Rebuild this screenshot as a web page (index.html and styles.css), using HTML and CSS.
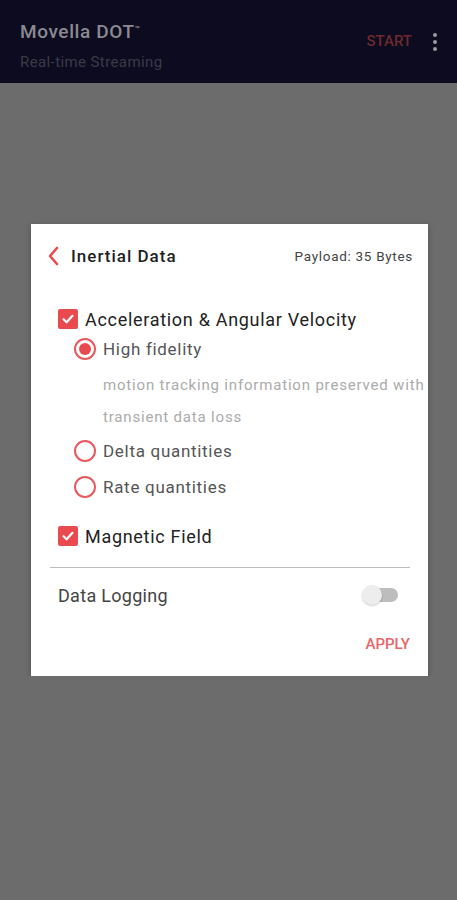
FILE: index.html
```html
<!DOCTYPE html>
<html lang="en">
<head>
    <meta charset="UTF-8">
    <title>Movella DOT - Real-time Streaming</title>
    <link rel="stylesheet" href="styles.css">
</head>
<body>

<div class="appbar">
    <div class="appbar-titles">
        <div class="app-title">Movella DOT<span class="tm">™</span></div>
        <div class="app-subtitle">Real-time Streaming</div>
    </div>
    <div class="appbar-start">START</div>
    <div class="kebab"><span></span><span></span><span></span></div>
</div>

<div class="dialog">
    <div class="dialog-header">
        <svg class="back" width="12" height="20" viewBox="0 0 12 20">
            <path d="M10 2 L3 10 L10 18" fill="none" stroke="#e84a4f" stroke-width="2.6" stroke-linecap="round" stroke-linejoin="round"/>
        </svg>
        <div class="dialog-title">Inertial Data</div>
        <div class="payload">Payload: 35 Bytes</div>
    </div>

    <div class="check-row first">
        <span class="checkbox"><svg width="14" height="14" viewBox="0 0 14 14"><path d="M2.5 7.2 L5.6 10.2 L11.5 3.8" fill="none" stroke="#fff" stroke-width="2.2" stroke-linecap="round" stroke-linejoin="round"/></svg></span>
        <span class="check-label">Acceleration &amp; Angular Velocity</span>
    </div>
    <div class="radio-row">
        <span class="radio checked"></span>
        <span class="radio-label">High fidelity</span>
    </div>
    <div class="description">
        motion tracking information preserved with<br>
        transient data loss
    </div>
    <div class="radio-row tall">
        <span class="radio"></span>
        <span class="radio-label">Delta quantities</span>
    </div>
    <div class="radio-row tall">
        <span class="radio"></span>
        <span class="radio-label">Rate quantities</span>
    </div>

    <div class="check-row magnetic">
        <span class="checkbox"><svg width="14" height="14" viewBox="0 0 14 14"><path d="M2.5 7.2 L5.6 10.2 L11.5 3.8" fill="none" stroke="#fff" stroke-width="2.2" stroke-linecap="round" stroke-linejoin="round"/></svg></span>
        <span class="check-label">Magnetic Field</span>
    </div>

    <div class="divider"></div>

    <div class="logging-row">
        <span class="logging-label">Data Logging</span>
        <span class="switch"><span class="switch-thumb"></span></span>
    </div>

    <div class="actions">
        <span class="apply">APPLY</span>
    </div>
</div>

</body>
</html>
```

FILE: styles.css
```css
body {
    margin: 0;
    background-color: #6c6c6c;
    font-family: Roboto, "Liberation Sans", sans-serif;
}
.appbar {
    height: 83px;
    background-color: #0c0b1f;
    display: flex;
    align-items: flex-start;
    padding: 0 0 0 20px;
    box-sizing: border-box;
}
.appbar-titles {
    flex: 1;
    padding-top: 21px;
}
.app-title {
    font-size: 19px;
    font-weight: 500;
    color: #8b8a90;
    line-height: 22px;
    letter-spacing: 0.6px;
}
.tm {
    font-size: 8px;
    vertical-align: top;
    position: relative;
    top: -2px;
}
.app-subtitle {
    font-size: 15px;
    color: #3b3a48;
    margin-top: 9px;
    line-height: 20px;
    letter-spacing: 0.4px;
}
.appbar-start {
    font-size: 15px;
    font-weight: 500;
    color: #6c2a2e;
    padding-top: 32px;
    margin-right: 21px;
}
.kebab {
    display: flex;
    flex-direction: column;
    gap: 3px;
    padding-top: 33px;
    margin-right: 20px;
}
.kebab span {
    width: 4px;
    height: 4px;
    border-radius: 50%;
    background-color: #9a9aa0;
}
.dialog {
    width: 397px;
    margin: 141px 0 0 31px;
    background-color: #fff;
    padding: 20px 18px 19px 19px;
    box-sizing: border-box;
    box-shadow: 0 2px 6px rgba(0, 0, 0, 0.25);
    letter-spacing: 0.7px;
}
.dialog-header {
    height: 24px;
    display: flex;
    align-items: center;
}
.back {
    margin-left: -3px;
    margin-right: 12px;
}
.dialog-title {
    flex: 1;
    font-size: 17px;
    font-weight: 500;
    color: #1f1f1f;
    letter-spacing: 1px;
}
.payload {
    font-size: 13.5px;
    color: #444;
    margin-right: -3px;
}
.check-row {
    height: 30px;
    display: flex;
    align-items: center;
    padding-left: 8px;
}
.check-row.first {
    margin-top: 36px;
}
.check-row.magnetic {
    margin-top: 16px;
}
.checkbox {
    width: 20px;
    height: 20px;
    border-radius: 2px;
    background-color: #e84a4f;
    display: flex;
    align-items: center;
    justify-content: center;
    margin-right: 7px;
}
.check-label {
    font-size: 18px;
    color: #222;
}
.radio-row {
    height: 30px;
    display: flex;
    align-items: center;
    padding-left: 24px;
}
.radio-row.tall {
    height: 36px;
}
.radio {
    width: 18px;
    height: 18px;
    border: 2px solid #e8595e;
    border-radius: 50%;
    margin-right: 7px;
    position: relative;
}
.radio.checked::after {
    content: "";
    position: absolute;
    left: 3px;
    top: 3px;
    width: 12px;
    height: 12px;
    border-radius: 50%;
    background-color: #e84a4f;
}
.radio-label {
    font-size: 17px;
    color: #555;
}
.description {
    margin-top: 5px;
    padding-left: 53px;
    margin-right: -18px;
    font-size: 15px;
    line-height: 32px;
    color: #ababab;
    white-space: nowrap;
    letter-spacing: 0.82px;
}
.divider {
    height: 1px;
    background-color: #bcbcbc;
    margin-top: 16px;
}
.logging-row {
    height: 30px;
    margin-top: 12px;
    display: flex;
    align-items: center;
    padding-left: 8px;
}
.logging-label {
    flex: 1;
    font-size: 18px;
    color: #444;
    letter-spacing: 0.3px;
}
.switch {
    width: 32px;
    height: 14px;
    border-radius: 7px;
    background-color: #bdbdbd;
    margin-right: 12px;
    position: relative;
}
.switch-thumb {
    position: absolute;
    left: -4px;
    top: -3px;
    width: 20px;
    height: 20px;
    border-radius: 50%;
    background-color: #ededed;
    box-shadow: 0 1px 2px rgba(0, 0, 0, 0.2);
}
.actions {
    height: 26px;
    margin-top: 21px;
    display: flex;
    align-items: center;
    justify-content: flex-end;
}
.apply {
    font-size: 15px;
    font-weight: 500;
    color: #e8646a;
    letter-spacing: 0;
}
```
